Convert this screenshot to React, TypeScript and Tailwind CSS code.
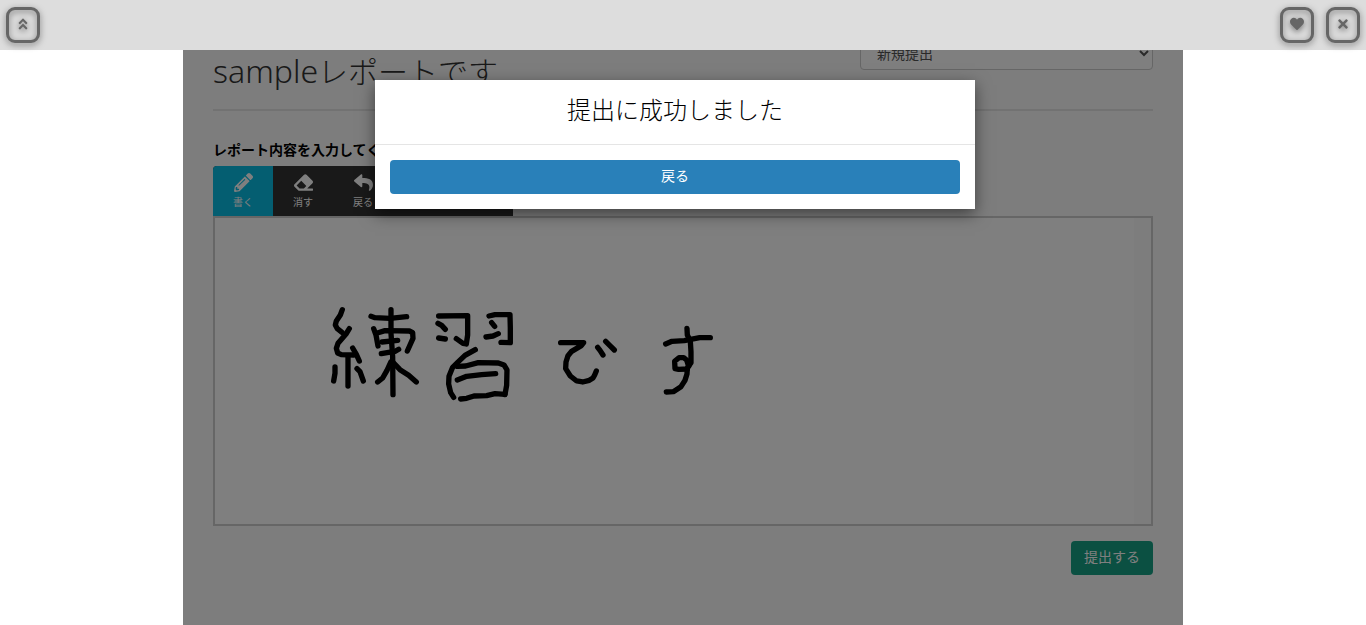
import React from "react";
import {
  FaAngleDoubleUp,
  FaEraser,
  FaHeart,
  FaPencilAlt,
  FaReply,
  FaTimes,
} from "react-icons/fa";

type IconButtonProps = {
  label: string;
  children: React.ReactNode;
};

const IconButton: React.FC<IconButtonProps> = ({ label, children }) => {
  return (
    <button
      type="button"
      aria-label={label}
      className="flex h-9 w-[34px] items-center justify-center rounded-[9px] border-3 border-[#666] pb-0.5 text-[#666] drop-shadow-[0_2px_3px_rgba(0,0,0,0.5)]"
    >
      {children}
    </button>
  );
};

type ToolButtonProps = {
  label: string;
  active?: boolean;
  children: React.ReactNode;
};

const ToolButton: React.FC<ToolButtonProps> = ({ label, active, children }) => {
  return (
    <button
      type="button"
      className={`flex w-[60px] flex-col items-center gap-0.5 pt-[7px] text-[10px] leading-4 text-white ${
        active ? "bg-[#09bce3]" : ""
      }`}
    >
      {children}
      <span>{label}</span>
    </button>
  );
};

const Handwriting: React.FC = () => {
  return (
    <svg
      width="919"
      height="306"
      viewBox="0 0 919 306"
      role="img"
      aria-label="練習です"
      className="max-w-full bg-white"
      fill="none"
      stroke="#000"
      strokeWidth="16"
      strokeLinecap="round"
      strokeLinejoin="round"
    >
      {/* 練 */}
      <g transform="translate(105 72) scale(0.3333)">
        <path d="M67 59 L61 75 L49 93 L46 105 L52 116 L66 127" />
        <path d="M88 116 L78 132 L54 160 L49 175 L53 189 L64 194 L101 195" />
        <path d="M98 174 L109 193 L118 213" />
        <path d="M84 197 L84 288" />
        <path d="M45 231 L45 250 L41 273" />
        <path d="M111 236 L120 245 L130 273" />
        <path d="M153 79 L165 83 L210 85 L260 80" />
        <path d="M213 59 L213 130 L218 200 L219 314" />
        <path d="M161 116 L168 135 L174 168" />
        <path d="M172 129 L195 122 L268 123 L278 128 L279 145 L262 183" />
        <path d="M186 156 L233 151" />
        <path d="M184 191 L206 187 L226 184 L236 178" />
        <path d="M213 215 L201 241 L188 264 L173 276" />
        <path d="M217 215 L240 239 L266 256 L289 276" />
      </g>
      {/* 習 */}
      <g transform="translate(105 72) scale(0.3333)">
        <path d="M356 78 L443 77 L443 135 L439 162 L429 160 L409 146" />
        <path d="M354 100 L365 106 L376 118" />
        <path d="M356 144 L376 147" />
        <path d="M507 78 L525 74 L570 74 L571 113 L571 158 L543 157" />
        <path d="M515 98 L524 109" />
        <path d="M498 141 L519 138 L535 131" />
        <path d="M466 179 L435 196 L413 217 L398 232 L387 259 L386 282 L392 308 L401 322" />
        <path d="M412 229 L437 228 L475 218 L535 219 L552 225 L561 240 L560 286 L555 314" />
        <path d="M412 270 L440 259 L485 254 L527 251" />
        <path d="M422 327 L440 325 L462 318 L500 317 L525 311 L555 313" />
      </g>
      {/* です */}
      <g transform="translate(325 92) scale(0.3333)">
        <path d="M62 98 L131 98 L124 107 L95 124 L84 137 L78 156 L77 176 L91 198 L110 213 L128 216 L148 211 L159 204 L164 195 L169 183" />
        <path d="M173 112 L180 121 L189 135" />
        <path d="M197 94 L209 106 L223 120" />
        <path d="M377 102 L396 94 L433 92 L479 83 L511 83" />
        <path d="M441 55 L442 75 L451 93 L453 125 L453 158 L442 174 L441 192 L435 211 L423 230 L400 245 L379 246" />
        <path d="M446 169 L440 150 L431 143 L417 143 L404 154 L405 176 L416 178 L442 177" />
      </g>
    </svg>
  );
};

const SuccessModal: React.FC = () => {
  return (
    <div className="absolute inset-0 bg-black/50 pt-[30px] pr-4">
      <div
        role="dialog"
        aria-labelledby="modal-title"
        className="mx-auto max-w-[600px] bg-white shadow-[0_5px_15px_rgba(0,0,0,0.5)]"
      >
        <div className="border-b border-[#e5e5e5] px-[15px] pt-[15px] pb-[19px]">
          <h4
            id="modal-title"
            className="text-center text-2xl leading-[30px] font-light text-black"
          >
            提出に成功しました
          </h4>
        </div>
        <div className="p-[15px]">
          <button
            type="button"
            className="block h-[34px] w-full rounded bg-[#2980b9] pb-0.5 text-sm text-white"
          >
            戻る
          </button>
        </div>
      </div>
    </div>
  );
};

export default function App() {
  return (
    <div className="flex h-screen flex-col bg-white font-['Noto_Sans','Noto_Sans_CJK_JP',sans-serif] text-sm text-[#333]">
      <header className="flex h-[50px] shrink-0 items-center justify-between bg-[#ddd] px-1.5">
        <IconButton label="上へ">
          <FaAngleDoubleUp size={14} />
        </IconButton>
        <div className="flex gap-3">
          <IconButton label="お気に入り">
            <FaHeart size={14} />
          </IconButton>
          <IconButton label="閉じる">
            <FaTimes size={14} />
          </IconButton>
        </div>
      </header>

      <main className="relative mx-auto flex min-h-0 w-full max-w-[1000px] flex-1 flex-col justify-end overflow-hidden bg-[#fafafa] px-[30px] pb-[50px]">
        <div className="mb-[29px] flex items-start justify-between border-b-2 border-[#e4e4e4] pb-5">
          <h3 className="pt-[18px] text-3xl leading-[34px] font-light">
            <span className="text-[32px] leading-[34px]">sample</span>
            レポートです
          </h3>
          <select
            aria-label="提出先"
            className="h-[34px] w-[293px] rounded border border-[#ccc] bg-white px-3 text-[#555]"
          >
            <option>新規提出</option>
          </select>
        </div>

        <p className="mb-1.5 leading-5 font-bold text-black">
          レポート内容を入力してください
        </p>
        <div className="flex h-[50px] w-[300px] shrink-0 overflow-hidden rounded-tl bg-[#333]">
          <ToolButton label="書く" active>
            <FaPencilAlt size={19} />
          </ToolButton>
          <ToolButton label="消す">
            <FaEraser size={19} />
          </ToolButton>
          <ToolButton label="戻る">
            <FaReply size={19} />
          </ToolButton>
        </div>
        <div className="shrink-0 overflow-hidden border-2 border-[#ccc]">
          <Handwriting />
        </div>
        <button
          type="button"
          className="mt-[15px] h-[34px] shrink-0 self-end rounded bg-[#16a085] px-[13px] pb-0.5 text-white"
        >
          提出する
        </button>

        <SuccessModal />
      </main>
    </div>
  );
}
